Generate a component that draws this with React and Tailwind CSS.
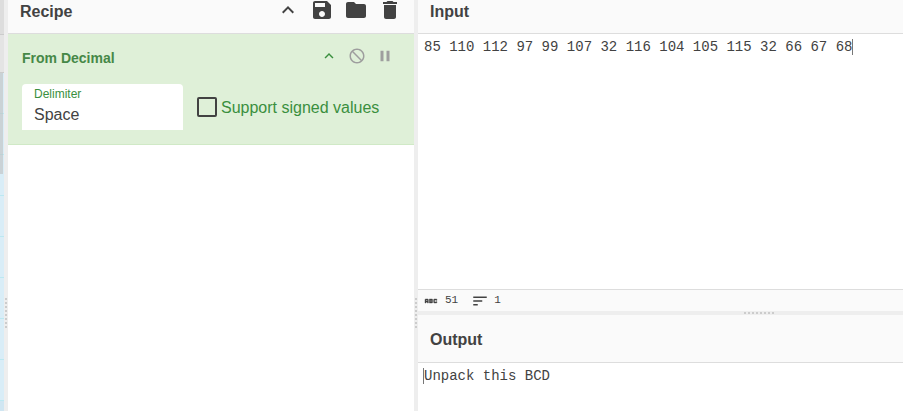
import React from "react";

const iconPaths = {
  up: "M7.41 15.41L12 10.83l4.59 4.58L18 14l-6-6-6 6z",
  save: "M17 3H5c-1.11 0-2 .9-2 2v14c0 1.1.89 2 2 2h14c1.1 0 2-.9 2-2V7l-4-4zm-5 16c-1.66 0-3-1.34-3-3s1.34-3 3-3 3 1.34 3 3-1.34 3-3 3zm3-10H5V5h10v4z",
  folder: "M10 4H4c-1.1 0-1.99.9-1.99 2L2 18c0 1.1.9 2 2 2h16c1.1 0 2-.9 2-2V8c0-1.1-.9-2-2-2h-8l-2-2z",
  trash: "M6 19c0 1.1.9 2 2 2h8c1.1 0 2-.9 2-2V7H6v12zM19 4h-3.5l-1-1h-5l-1 1H5v2h14V4z",
  block: "M12 2C6.48 2 2 6.48 2 12s4.48 10 10 10 10-4.48 10-10S17.52 2 12 2zm0 18c-4.42 0-8-3.58-8-8 0-1.85.63-3.55 1.69-4.9L16.9 18.31C15.55 19.37 13.85 20 12 20zm6.31-3.1L7.1 5.69C8.45 4.63 10.15 4 12 4c4.42 0 8 3.58 8 8 0 1.85-.63 3.55-1.69 4.9z",
  pause: "M6 19h4V5H6v14zm8-14v14h4V5h-4z",
  lines: "M3 18h6v-2H3v2zM3 6v2h18V6H3zm0 7h12v-2H3v2z",
  abc: "M21 11h-1.5v-.5h-2v3h2V13H21v1c0 .55-.45 1-1 1h-3c-.55 0-1-.45-1-1v-4c0-.55.45-1 1-1h3c.55 0 1 .45 1 1v1zM8 10v5H6.5v-1.5h-2V15H3v-5c0-.55.45-1 1-1h3c.55 0 1 .45 1 1zm-1.5.5h-2V12h2v-1.5zm7 1.5c.55 0 1 .45 1 1v1c0 .55-.45 1-1 1h-4V9h4c.55 0 1 .45 1 1v1c0 .55-.45 1-1 1zM11 10.5v.75h2v-.75h-2zm2 2.25h-2v.75h2v-.75z",
};

function Icon({ name, className, stroke = 0 }) {
  return (
    <svg
      viewBox="0 0 24 24"
      fill="currentColor"
      stroke="currentColor"
      strokeWidth={stroke}
      className={className}
      aria-hidden="true"
    >
      <path d={iconPaths[name]} />
    </svg>
  );
}

function IconButton({ name, label, size = "size-6" }) {
  return (
    <button type="button" aria-label={label} className="block">
      <Icon name={name} className={size} />
    </button>
  );
}

const dots = [0, 1, 2, 3, 4, 5, 6, 7];

function ColumnGutter() {
  return (
    <div className="flex w-1 shrink-0 flex-col items-center bg-[#eeeeee] pt-[298px]">
      <div className="flex flex-col gap-[2px]">
        {dots.map((d) => (
          <span key={d} className="block size-[2px] bg-[#cccccc]" />
        ))}
      </div>
    </div>
  );
}

function RowGutter() {
  return (
    <div className="flex h-1 shrink-0 items-center justify-center bg-[#eeeeee] pl-[197px]">
      <div className="flex gap-[2px]">
        {dots.map((d) => (
          <span key={d} className="block size-[2px] bg-[#cccccc]" />
        ))}
      </div>
    </div>
  );
}

// The visible right edge of the operations list, with its scrollbar thumb on top.
function OperationsEdge() {
  return (
    <aside className="relative flex w-1 shrink-0 flex-col overflow-hidden">
      <div className="h-[34px] shrink-0 bg-[#dddddd]" />
      <div className="h-[39px] shrink-0 border-y border-[#cccccc] bg-[#e4e4e4]" />
      {dots.map((d) => (
        <div key={d} className="h-[41px] shrink-0 border-b border-[#bce8f1] bg-[#d9edf7]" />
      ))}
      <div className="h-[41px] shrink-0 bg-[#d0e6f2]" />
      <div className="absolute top-[73px] left-0 h-[101px] w-[3px] bg-[#c0c0c0]/60" />
    </aside>
  );
}

function Recipe() {
  return (
    <section className="min-w-0 flex-[406] bg-white">
      <header className="flex h-[34px] items-start justify-between border-b border-[#dddddd] bg-[#fafafa] px-3">
        <h2 className="pt-[2px] text-base leading-5 font-bold text-[#424242]">Recipe</h2>
        <div className="-mt-[2px] flex gap-[10px] text-[#424242]">
          <IconButton name="up" label="Collapse recipe" />
          <IconButton name="save" label="Save recipe" />
          <IconButton name="folder" label="Load recipe" />
          <IconButton name="trash" label="Clear recipe" />
        </div>
      </header>
      <article className="border-b border-[#d0e9c6] bg-[#dff0d8] px-[14px] pt-3 pb-[14px]">
        <div className="flex h-6 items-center justify-between pr-[6px]">
          <h3 className="text-sm font-bold text-[#468847]">From Decimal</h3>
          <div className="flex items-center gap-[10px] pb-1 text-[#9e9e9e]">
            <span className="text-[#3a8f3e]">
              <IconButton name="up" label="Collapse operation" size="size-[18px]" />
            </span>
            <IconButton name="block" label="Disable operation" size="size-[18px]" />
            <IconButton name="pause" label="Set breakpoint" size="size-[18px]" />
          </div>
        </div>
        <div className="flex items-end gap-[14px] pt-[14px]">
          <label className="block h-[46px] w-[161px] rounded-t bg-white px-3 pt-[3px] text-[#3a8f3e]">
            <span className="block text-xs leading-[14px]">Delimiter</span>
            <select className="block w-full appearance-none bg-transparent pt-1 text-base leading-5 text-[#424242]">
              <option>Space</option>
            </select>
          </label>
          <label className="flex h-[46px] items-center gap-1 text-base text-[#3a8f3e]">
            <input type="checkbox" className="size-5 appearance-none rounded-xs border-2 border-[#424242]" />
            <span className="pt-[2px]">Support signed values</span>
          </label>
        </div>
      </article>
    </section>
  );
}

function InputOutput() {
  return (
    <section className="flex min-w-0 flex-[485] flex-col bg-white">
      <header className="h-[34px] shrink-0 border-b border-[#dddddd] bg-[#fafafa] px-3 pt-[2px]">
        <h2 className="text-base leading-5 font-bold text-[#424242]">Input</h2>
      </header>
      <div className="flex h-[255px] shrink-0 items-start px-[6px] pt-[5px] font-['Liberation_Mono',monospace] text-sm leading-4 text-[#424242]">
        <span className="border-r border-[#777777] whitespace-nowrap">
          85 110 112 97 99 107 32 116 104 105 115 32 66 67 68
        </span>
      </div>
      <footer className="flex h-[22px] shrink-0 items-center border-t border-[#dddddd] bg-[#fafafa] px-[5px] font-['Liberation_Mono',monospace] text-[11px] text-[#424242]">
        <Icon name="abc" className="size-4" stroke={0.6} />
        <span className="pl-[6px]">51</span>
        <Icon name="lines" className="ml-[13px] size-[18px]" />
        <span className="pl-[5px]">1</span>
      </footer>
      <RowGutter />
      <header className="flex h-12 shrink-0 items-center border-b border-[#dddddd] bg-[#fafafa] px-3 pt-[2px]">
        <h2 className="text-base leading-5 font-bold text-[#424242]">Output</h2>
      </header>
      <div className="flex items-start px-[5px] pt-[5px] font-['Liberation_Mono',monospace] text-sm leading-4 text-[#424242]">
        <span className="border-l border-[#777777] whitespace-nowrap">Unpack this BCD</span>
      </div>
    </section>
  );
}

export default function App() {
  return (
    <main className="flex h-screen w-full overflow-hidden bg-white font-['Liberation_Sans',Arial,sans-serif]">
      <OperationsEdge />
      <ColumnGutter />
      <Recipe />
      <ColumnGutter />
      <InputOutput />
    </main>
  );
}
